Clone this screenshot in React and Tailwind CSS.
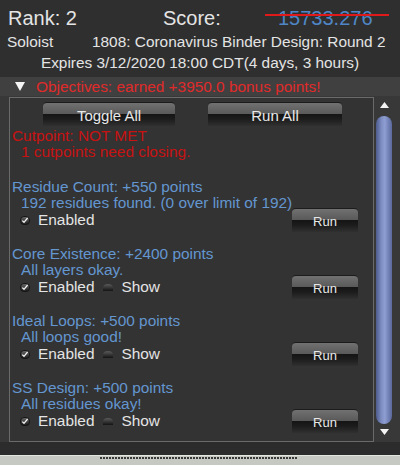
import React from 'react';

const objectives = [
  { title: 'Residue Count: +550 points', detail: '192 residues found. (0 over limit of 192)', show: false },
  { title: 'Core Existence: +2400 points', detail: 'All layers okay.', show: true },
  { title: 'Ideal Loops: +500 points', detail: 'All loops good!', show: true },
  { title: 'SS Design: +500 points', detail: 'All residues okay!', show: true },
];

function GlossButton({ children, className, textClass }) {
  return (
    <button
      className={`flex h-[24px] items-center justify-center rounded-t-[4px] border-t border-[#1c1c1c] bg-[linear-gradient(to_bottom,#717171_0%,#5a5a5a_46%,#151515_50%,#1c1c1c_70%,#303030_100%)] text-[#e8e8e8] ${textClass} ${className}`}
    >
      <span className="mt-[3px] leading-[16px]">{children}</span>
    </button>
  );
}

function CheckIcon() {
  return (
    <svg width="10" height="9" viewBox="0 0 10 9">
      <defs>
        <linearGradient id="cb" x1="0" y1="0" x2="0" y2="1">
          <stop offset="0" stopColor="#6a6a6a" />
          <stop offset="1" stopColor="#1a1a1a" />
        </linearGradient>
      </defs>
      <rect x="0.5" y="0.5" width="9" height="8" rx="3.5" fill="url(#cb)" stroke="#151515" strokeWidth="1" />
      <path d="M2.3 4.6 L4 6.3 L7.6 2" stroke="#f2f2f2" strokeWidth="1.3" fill="none" />
    </svg>
  );
}

function RadioIcon() {
  return (
    <svg width="10" height="7" viewBox="0 0 10 7">
      <defs>
        <linearGradient id="rb" x1="0" y1="0" x2="0" y2="1">
          <stop offset="0" stopColor="#5a5a5a" />
          <stop offset="1" stopColor="#141414" />
        </linearGradient>
      </defs>
      <path d="M0 7 L0 4 Q0 0 5 0 Q10 0 10 4 L10 7 Z" fill="url(#rb)" />
    </svg>
  );
}

function Objective({ item, first }) {
  return (
    <div className={first ? 'mt-[19px]' : 'mt-[14px]'}>
      <div className="pl-[2px] leading-[16px] text-[#6496d0]">{item.title}</div>
      <div className="pl-[11px] leading-[16px] text-[#6496d0]">{item.detail}</div>
      <div className="-mt-[3px] flex h-[24px] items-center">
        <div className="ml-[10px] flex items-center">
          <CheckIcon />
          <span className="ml-[8px] leading-[16px] text-[#e4e4e4]">Enabled</span>
        </div>
        {item.show && (
          <div className="ml-[9px] flex items-center">
            <RadioIcon />
            <span className="ml-[8px] leading-[16px] text-[#e4e4e4]">Show</span>
          </div>
        )}
        <GlossButton className="ml-auto mr-[15px] w-[66px]" textClass="text-[13px]">
          Run
        </GlossButton>
      </div>
    </div>
  );
}

export default function App() {
  return (
    <div className="flex h-[465px] w-[400px] flex-col overflow-hidden bg-[#383838] font-['Liberation_Sans',Arial,sans-serif]">
      {/* header */}
      <div className="h-[78px] bg-[#2f2f2f] pt-[6px] text-[#e4e4e4]">
        <div className="flex h-[24px] text-[20px] leading-[24px]">
          <span className="w-[163px] pl-[8px]">Rank: 2</span>
          <span className="w-[115px]">Score:</span>
          <span className="relative text-[#4f86c6]">
            15733.276
            <span className="absolute left-[-13px] top-[8px] h-[2px] w-[124px] bg-[#e01a1a]" />
          </span>
        </div>
        <div className="mt-[3px] flex h-[18px] text-[15.4px] leading-[18px]">
          <span className="w-[92px] pl-[7px]">Soloist</span>
          <span>1808: Coronavirus Binder Design: Round 2</span>
        </div>
        <div className="mt-[3px] h-[18px] text-center text-[15.4px] leading-[18px]">
          Expires 3/12/2020 18:00 CDT(4 days, 3 hours)
        </div>
      </div>

      {/* objectives header */}
      <div className="flex h-[19px] items-center bg-[#404040] pl-[15px] text-[15.4px] leading-[19px]">
        <svg width="10" height="9" viewBox="0 0 10 9">
          <path d="M0 0 L10 0 L5 9 Z" fill="#f4f4f4" />
        </svg>
        <span className="ml-[11px] text-[#e02a2a]">Objectives: earned +3950.0 bonus points!</span>
      </div>

      {/* body */}
      <div className="flex">
        <div className="ml-[9px] mt-[1px] h-[345px] w-[365px] border border-[#6a6a6a] bg-[#333333] text-[15.4px]">
          <div className="mt-[4px] flex">
            <GlossButton className="ml-[33px] w-[132px]" textClass="text-[15px]">
              Toggle All
            </GlossButton>
            <GlossButton className="ml-[33px] w-[134px]" textClass="text-[15px]">
              Run All
            </GlossButton>
          </div>
          <div className="mt-[2px] pl-[2px] leading-[16px] text-[#c81212]">Cutpoint: NOT MET</div>
          <div className="pl-[11px] leading-[16px] text-[#c81212]">1 cutpoints need closing.</div>
          {objectives.map((item, i) => (
            <Objective key={item.title} item={item} first={i === 0} />
          ))}
        </div>

        {/* scrollbar */}
        <div className="ml-[1px] mt-[1px] flex w-[18px] flex-col items-center">
          <svg className="mt-[5px]" width="9" height="6" viewBox="0 0 9 6">
            <path d="M0 6 L9 6 L4.5 0 Z" fill="#f4f4f4" />
          </svg>
          <div className="mt-[8px] h-[308px] w-[16px] rounded-full bg-[linear-gradient(to_right,#4c5a8c_0%,#7f8fc4_35%,#8e9ed2_55%,#5a689c_100%)]" />
          <svg className="mt-[5px]" width="9" height="6" viewBox="0 0 9 6">
            <path d="M0 0 L9 0 L4.5 6 Z" fill="#f4f4f4" />
          </svg>
        </div>
      </div>

      {/* footer */}
      <div className="h-[13px] bg-[#2c2c2c]" />
      <div className="h-[10px] border-t border-[#e2e4de] bg-[#c6c8c2] pt-[1px]">
        <div className="ml-[100px] h-[2px] w-[197px] bg-[repeating-linear-gradient(to_right,#3a3a3a_0px,#3a3a3a_2px,transparent_2px,transparent_3px)]" />
      </div>
    </div>
  );
}
